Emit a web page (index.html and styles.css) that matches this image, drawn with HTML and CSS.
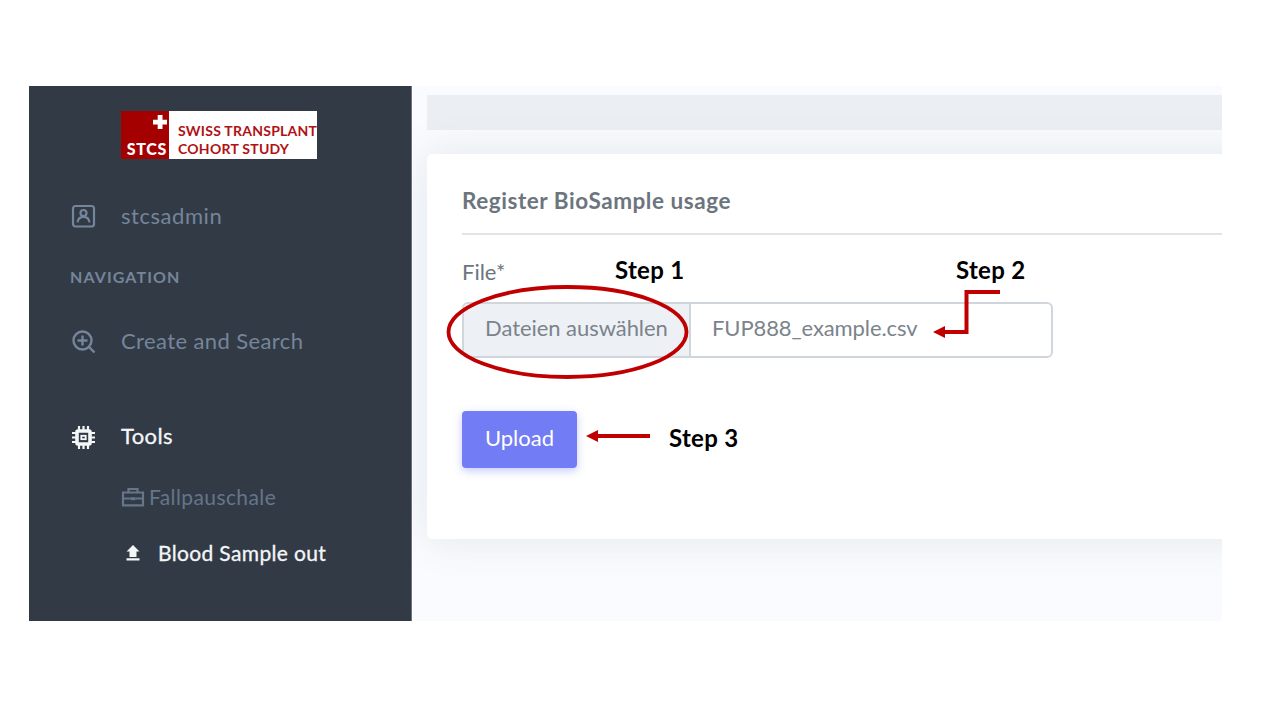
FILE: index.html
```html
<!DOCTYPE html>
<html lang="de">
<head>
<meta charset="utf-8">
<title>Register BioSample usage</title>
<link rel="stylesheet" href="styles.css">
</head>
<body>
<div class="frame">
  <aside class="sidebar">
    <div class="logo">
      <div class="logo-mark">
        <svg class="cross" width="14" height="14" viewBox="0 0 14 14"><path d="M4.700 0h4.800v4.700H14v4.800H9.500V14H4.700V9.500H0V4.700h4.700z" fill="#fff"/></svg>
        <span class="stcs">STCS</span>
      </div>
      <div class="logo-name"><span class="name-a">SWISS TRANSPLANT</span><span class="name-b">COHORT STUDY</span></div>
    </div>
    <nav class="nav">
      <a class="item user">
        <svg width="26" height="26" viewBox="0 0 26 26" fill="none" stroke="currentColor" stroke-width="2.200"><rect x="3" y="3" width="21" height="20.500" rx="2.500"/><circle cx="13.500" cy="10" r="3"/><path d="M7.500 19.300c.5-3.700 2.700-5.500 6-5.500s5.500 1.800 6 5.500"/></svg>
        <span class="t-user">stcsadmin</span>
      </a>
      <div class="heading">NAVIGATION</div>
      <a class="item search">
        <svg width="26" height="26" viewBox="0 0 26 26" fill="none" stroke="currentColor" stroke-width="2.400"><circle cx="12.500" cy="11.500" r="9"/><path d="M12.500 6.500v10M7.500 11.500h10M18.500 17.500l6 6"/></svg>
        <span class="t-search">Create and Search</span>
      </a>
      <a class="item tools">
        <svg width="26" height="26" viewBox="0 0 26 26" fill="none" stroke="currentColor"><rect x="7" y="7" width="13" height="13" rx="1" stroke-width="3.600"/><rect x="11.300" y="11.800" width="4.400" height="3.400" stroke-width="1.800"/><path stroke-width="2.200" d="M9 2V6M13.500 2V6M18 2V6M9 21v4M13.500 21v4M18 21v4M2 9h4M2 13.500h4M2 18h4M21 9h4M21 13.500h4M21 18h4"/></svg>
        <span class="t-tools">Tools</span>
      </a>
      <a class="sub case">
        <svg width="24" height="20" viewBox="0 0 24 20" fill="none" stroke="currentColor" stroke-width="2.200"><path d="M2 5.500h20v12.800H2zM7.500 5V2h9v3M2 11.500h7.500M14.500 11.500H22"/><path d="M9.500 11.700h5" stroke-width="3"/></svg>
        <span class="t-case">Fallpauschale</span>
      </a>
      <a class="sub blood">
        <svg width="14" height="16" viewBox="0 0 14 16" fill="currentColor"><path d="M7 0l6.500 6.500H10.500V12H3.500V6.500H.5zM.5 13.200h13v2.300H.5z"/></svg>
        <span class="t-blood">Blood Sample out</span>
      </a>
    </nav>
  </aside>
  <main class="main">
    <div class="topbar"></div>
    <section class="card">
      <h1 class="title"><span>Register BioSample usage</span></h1>
      <label class="label">File*</label>
      <div class="file">
        <div class="choose"><span>Dateien auswählen</span></div>
        <div class="filename"><span>FUP888_example.csv</span></div>
      </div>
      <button class="upload"><span>Upload</span></button>
    </section>
  </main>
</div>
<div class="notes">
  <svg width="1280" height="720" viewBox="0 0 1280 720" fill="none" stroke="#c00000" stroke-width="4">
    <ellipse cx="567.500" cy="332" rx="119" ry="45" stroke-width="3.800"/>
    <path d="M1000 292H966.500V332H943"/>
    <path d="M650 436H596"/>
    <path d="M933 332l12-6v12zM586 436l12-6v12z" fill="#c00000" stroke="none"/>
  </svg>
  <span class="step one">Step 1</span>
  <span class="step two">Step 2</span>
  <span class="step three">Step 3</span>
</div>
</body>
</html>
```
FILE: styles.css
```css
* { box-sizing: border-box; }
body { margin: 0; width: 1280px; height: 720px; overflow: hidden; background: #fff; padding: 86px 58px 0 29px; font-family: Lato, "Open Sans", sans-serif; font-size: 22px; white-space: nowrap; }
.frame { display: flex; width: 1193px; height: 535px; overflow: hidden; }
.sidebar { position: relative; z-index: 1; width: 383px; flex: none; background: #323a46; padding-top: 25px; border-right: 1px solid #6c737e; }
.logo { display: flex; width: 196px; height: 48px; margin-left: 92px; background: #fff; color: #b01116; font-weight: 700; overflow: hidden; }
.logo-mark { width: 48px; flex: none; background: #a40000; color: #fff; display: flex; flex-direction: column; align-items: flex-end; padding: 4px 2px 0 0; }
.cross { display: block; }
.stcs { font-size: 16px; line-height: 16px; margin-top: 12px; font-weight: 900; letter-spacing: .7px; }
.logo-name { display: flex; flex-direction: column; font-size: 14px; line-height: 18px; padding: 11px 0 0 9px; letter-spacing: .25px; }
.nav { display: flex; flex-direction: column; color: #75859a; }
.item, .sub { display: flex; align-items: center; }
.item span, .sub span { margin-top: -2px; }
.item { height: 30px; padding-left: 41px; gap: 25px; }
.sub { height: 28px; padding-left: 92px; font-size: 21px; }
.user { margin-top: 42px; }
.t-user { letter-spacing: .55px; }
.heading { margin: 35px 0 0 41px; font-size: 16px; line-height: 22px; font-weight: 700; letter-spacing: 1.100px; }
.search { margin-top: 39px; }
.item .t-search { letter-spacing: .4px; margin-top: -4px; }
.tools { margin-top: 65px; color: #f4f6f8; }
.item .t-tools { letter-spacing: .4px; margin-top: -4px; -webkit-text-stroke: .3px; }
.case { margin-top: 31px; gap: 4px; color: #65758a; }
.t-case { letter-spacing: .4px; }
.blood { margin-top: 28px; padding-left: 97px; gap: 18px; color: #f4f6f8; }
.t-blood { letter-spacing: .35px; -webkit-text-stroke: .3px; }
.main { flex: 1; min-width: 0; background: #f9fbfe; padding: 9px 0 0 14px; border-left: 1px solid #fff; }
.topbar { height: 35px; background: #ebeff4; }
.card { height: 385px; width: 860px; margin-top: 24px; padding: 33px 0 0 35px; background: #fff; border-radius: 5px; box-shadow: 0 0 42px rgba(80, 90, 110, .13); color: #6c757d; }
.title { margin: 0; height: 48px; border-bottom: 2px solid #e2e3e4; font-size: 22.500px; line-height: 28px; font-weight: 700; letter-spacing: .55px; }
.label { display: block; margin-top: 23px; line-height: 28px; }
.file { display: flex; margin-top: 16px; width: 591px; height: 56px; border: 2px solid #d1d6dc; border-radius: 6px; line-height: 47px; overflow: hidden; color: #7b838b; letter-spacing: -.05px; }
.choose { width: 227px; flex: none; background: #edf1f6; border-right: 2px solid #d1d6dc; padding-left: 21px; }
.filename { padding-left: 21px; letter-spacing: -.1px; }
.upload { display: block; margin: 53px 0 0; width: 115px; height: 57px; border: 0; border-radius: 4px; background: #727cf5; box-shadow: 0 3px 8px rgba(114, 124, 245, .4); color: #fff; font: inherit; line-height: 28px; padding: 0 0 4px; }
.notes { position: absolute; left: 0; top: 0; width: 1280px; height: 720px; }
.step { position: absolute; font-size: 24px; line-height: 28px; font-weight: 700; color: #000; letter-spacing: .3px; }
.one { left: 615px; top: 256px; }
.two { left: 956px; top: 256px; }
.three { left: 669px; top: 424px; }
```
